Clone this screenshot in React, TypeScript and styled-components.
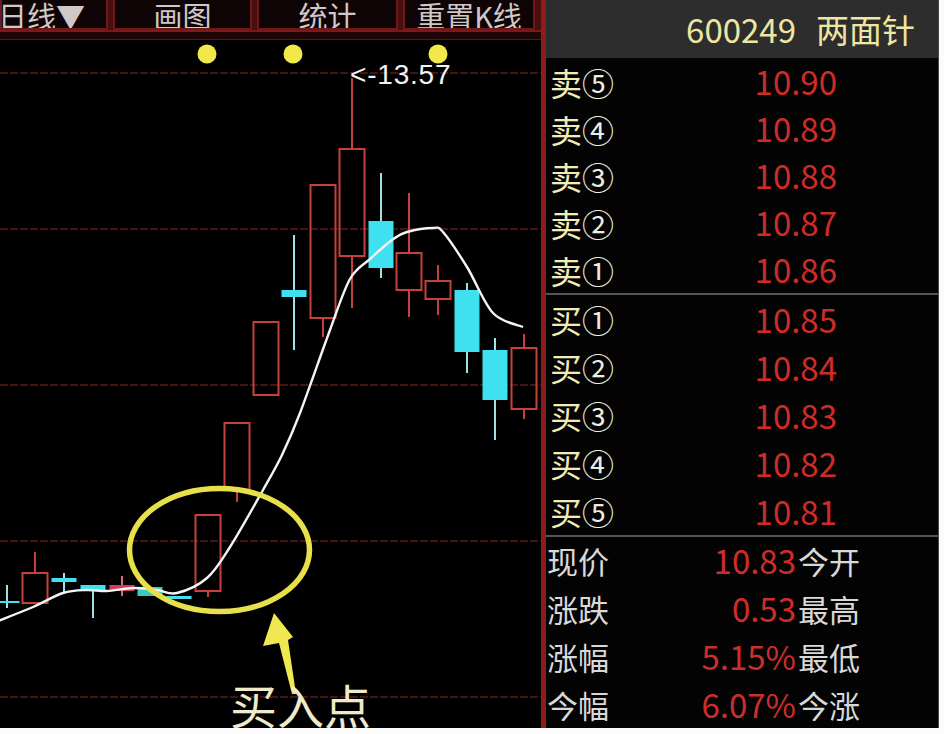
import React from "react";
import styled, { createGlobalStyle } from "styled-components";

const GlobalStyle = createGlobalStyle`
  html, body { margin: 0; padding: 0; background: #fbfbfb; }
  body { font-family: "Noto Sans CJK SC", "Noto Sans", sans-serif; }
`;

const Screen = styled.div`
  width: 944px;
  height: 734px;
  background: #fbfbfb;
  overflow: hidden;
`;

const Frame = styled.div`
  display: flex;
  width: 939px;
  height: 728px;
  background: #000;
`;

const ChartPane = styled.section`
  display: flex;
  flex-direction: column;
  width: 541px;
  flex: none;
  background: #000;
`;

const Toolbar = styled.div`
  display: flex;
  gap: 5px;
  height: 30px;
  flex: none;
  padding-right: 6px;
  background: #4a0e0e;
`;

const Tab = styled.div<{ $w: number; $left?: boolean }>`
  width: ${(p) => p.$w}px;
  flex: none;
  box-sizing: border-box;
  display: flex;
  align-items: flex-end;
  justify-content: ${(p) => (p.$left ? "flex-start" : "center")};
  overflow: hidden;
  background: #0f0405;
  border: 2px solid #701818;
  border-top: none;
  color: #cfc8c8;
  font-size: 29px;
  line-height: 1;
`;

const TabText = styled.span<{ $shift?: number }>`
  margin-left: ${(p) => p.$shift ?? 0}px;
  margin-bottom: -2px;
  white-space: nowrap;
`;

const Band = styled.div`
  height: 10px;
  flex: none;
  box-sizing: border-box;
  background: #200505;
  border-top: 2px solid #7c1a1a;
  border-bottom: 1px solid #5a1212;
`;

const ChartArea = styled.div`
  position: relative;
  flex: 1;
  overflow: hidden;
`;

const ChartSvg = styled.svg`
  display: block;
`;

const PriceTag = styled.div`
  position: absolute;
  left: 350px;
  top: 21px;
  color: #f2f2f2;
  font-family: "Liberation Sans", Arial, sans-serif;
  font-size: 28px;
  line-height: 1;
  letter-spacing: 0.8px;
  white-space: nowrap;
`;

const Annotation = styled.div`
  position: absolute;
  left: 230px;
  top: 640px;
  color: #efeacb;
  font-size: 47px;
  line-height: 1;
  white-space: nowrap;
`;

const QuotePanel = styled.section`
  width: 398px;
  flex: none;
  box-sizing: border-box;
  display: flex;
  flex-direction: column;
  background: #030303;
  border-left: 5px solid #8c1c1c;
  border-right: 1px solid #4a4a4a;
`;

const QuoteHeader = styled.header`
  height: 58px;
  flex: none;
  display: flex;
  align-items: center;
  justify-content: flex-end;
  padding-right: 23px;
  background: #2d2d2d;
  color: #eee6a2;
  font-size: 33px;
  line-height: 1;
`;

const StockName = styled.span`
  margin-left: 20px;
`;

const Book = styled.div`
  display: flex;
  flex-direction: column;
  flex: none;
`;

const BookRow = styled.div<{ $h: number }>`
  height: ${(p) => p.$h}px;
  display: flex;
  align-items: center;
  padding: 0 101px 0 4px;
  line-height: 1;
`;

const Side = styled.span`
  color: #f1ebb6;
  font-size: 32px;
`;

const Level = styled.span`
  color: #ecece0;
  font-size: 32px;
`;

const Price = styled.span`
  margin-left: auto;
  color: #cf2b27;
  font-size: 33px;
`;

const Divider = styled.div`
  height: 2px;
  flex: none;
  background: #555;
`;

const StatRow = styled.div`
  height: 48px;
  display: grid;
  grid-template-columns: 1fr auto 142px;
  align-items: center;
  padding-left: 1px;
  line-height: 1;
`;

const StatLabel = styled.span<{ $pad?: number }>`
  color: #d8d8d8;
  font-size: 31px;
  padding-left: ${(p) => p.$pad ?? 0}px;
`;

const StatValue = styled.span`
  color: #cc2e2a;
  font-size: 33px;
  text-align: right;
`;

type Kind = "up" | "down" | "pink" | "teal";
interface Candle {
  x: number;
  top: number;
  bot: number;
  hi?: number;
  lo?: number;
  k: Kind;
}

const candles: Candle[] = [
  { x: 7, top: 601, bot: 603, hi: 585, lo: 608, k: "down" },
  { x: 35, top: 573, bot: 603, hi: 552, k: "up" },
  { x: 64, top: 578, bot: 582, hi: 573, lo: 592, k: "down" },
  { x: 93, top: 585, bot: 591, hi: 585, lo: 618, k: "down" },
  { x: 122, top: 585, bot: 591, hi: 576, lo: 596, k: "pink" },
  { x: 150, top: 587, bot: 596, k: "teal" },
  { x: 179, top: 596, bot: 599, k: "down" },
  { x: 208, top: 515, bot: 591, lo: 597, k: "up" },
  { x: 237, top: 423, bot: 490, lo: 502, k: "up" },
  { x: 266, top: 322, bot: 395, k: "up" },
  { x: 294, top: 290, bot: 297, hi: 235, lo: 350, k: "down" },
  { x: 323, top: 185, bot: 318, lo: 337, k: "up" },
  { x: 352, top: 149, bot: 256, hi: 78, lo: 308, k: "up" },
  { x: 381, top: 221, bot: 268, hi: 173, lo: 278, k: "down" },
  { x: 409, top: 253, bot: 290, hi: 193, lo: 317, k: "up" },
  { x: 438, top: 281, bot: 299, hi: 265, lo: 315, k: "up" },
  { x: 467, top: 290, bot: 352, hi: 283, lo: 373, k: "down" },
  { x: 495, top: 350, bot: 400, hi: 338, lo: 440, k: "down" },
  { x: 524, top: 348, bot: 409, hi: 334, lo: 419, k: "up" },
];

const maPoints: [number, number][] = [
  [-2, 621], [33, 607], [63, 593], [87, 590], [107, 591], [133, 588], [157, 590],
  [177, 593], [207, 578], [230, 547], [263, 490], [282, 455], [300, 413],
  [330, 330], [350, 279], [370, 259], [392, 240], [407, 232], [433, 228],
  [443, 232], [467, 267], [493, 313], [523, 327],
];

function smoothPath(pts: [number, number][]) {
  let d = `M${pts[0][0]},${pts[0][1]}`;
  for (let i = 0; i < pts.length - 1; i++) {
    const p0 = pts[i - 1] || pts[i];
    const p1 = pts[i];
    const p2 = pts[i + 1];
    const p3 = pts[i + 2] || p2;
    const c1x = p1[0] + (p2[0] - p0[0]) / 6;
    const c1y = p1[1] + (p2[1] - p0[1]) / 6;
    const c2x = p2[0] - (p3[0] - p1[0]) / 6;
    const c2y = p2[1] - (p3[1] - p1[1]) / 6;
    d += ` C${c1x},${c1y} ${c2x},${c2y} ${p2[0]},${p2[1]}`;
  }
  return d;
}

const RED = "#c8403a";
const CYAN = "#3fe0f0";
const CYAN_WICK = "#9fdfe8";

function CandleMark({ c }: { c: Candle }) {
  const w = 25;
  const left = c.x - w / 2;
  if (c.k === "up") {
    return (
      <g stroke={RED} strokeWidth={2} fill="none">
        {c.hi !== undefined && <line x1={c.x} x2={c.x} y1={c.hi} y2={c.top} />}
        {c.lo !== undefined && <line x1={c.x} x2={c.x} y1={c.bot} y2={c.lo} />}
        <rect x={left} y={c.top} width={w} height={c.bot - c.top} />
      </g>
    );
  }
  const fill = c.k === "pink" ? "#d03c58" : c.k === "teal" ? "#36cbbc" : CYAN;
  const wick = c.k === "pink" ? "#d66a7c" : CYAN_WICK;
  return (
    <g>
      {c.hi !== undefined && c.lo !== undefined && (
        <line x1={c.x} x2={c.x} y1={c.hi} y2={c.lo} stroke={wick} strokeWidth={2} />
      )}
      <rect x={left} y={c.top} width={w} height={Math.max(c.bot - c.top, 2)} fill={fill} />
    </g>
  );
}

const gridYs = [73, 229, 385, 541, 697];

function KChart() {
  return (
    <ChartSvg width={541} height={688} viewBox="0 40 541 688">
      {gridYs.map((y) => (
        <line key={y} x1={0} x2={541} y1={y} y2={y} stroke="#5e1a1a" strokeWidth={1.5} strokeDasharray="8 2" />
      ))}
      {[207, 293, 438].map((x) => (
        <circle key={x} cx={x} cy={54} r={9.5} fill="#f2e84a" />
      ))}
      {candles.map((c, i) => (
        <CandleMark key={i} c={c} />
      ))}
      <path d={smoothPath(maPoints)} fill="none" stroke="#f4f4f4" strokeWidth={2.4} strokeLinejoin="round" />
      <ellipse cx={219.5} cy={550} rx={90} ry={61.5} fill="none" stroke="#e8e04a" strokeWidth={5.5} />
      <polygon
        points="274,613 293,637 288,640 296,694 292,694 279,643 263,646"
        fill="#f0e850"
      />
    </ChartSvg>
  );
}

const sells = [
  { n: "⑤", p: "10.90" },
  { n: "④", p: "10.89" },
  { n: "③", p: "10.88" },
  { n: "②", p: "10.87" },
  { n: "①", p: "10.86" },
];
const buys = [
  { n: "①", p: "10.85" },
  { n: "②", p: "10.84" },
  { n: "③", p: "10.83" },
  { n: "④", p: "10.82" },
  { n: "⑤", p: "10.81" },
];
const stats = [
  { a: "现价", v: "10.83", b: "今开" },
  { a: "涨跌", v: "0.53", b: "最高" },
  { a: "涨幅", v: "5.15%", b: "最低" },
  { a: "今幅", v: "6.07%", b: "今涨" },
];

export default function App() {
  return (
    <Screen>
      <GlobalStyle />
      <Frame>
        <ChartPane>
          <Toolbar>
            <Tab $w={108} $left>
              <TabText $shift={-4}>日线▼</TabText>
            </Tab>
            <Tab $w={139}>
              <TabText>画图</TabText>
            </Tab>
            <Tab $w={141}>
              <TabText>统计</TabText>
            </Tab>
            <Tab $w={132}>
              <TabText>重置K线</TabText>
            </Tab>
          </Toolbar>
          <Band />
          <ChartArea>
            <KChart />
            <PriceTag>&lt;-13.57</PriceTag>
            <Annotation>买入点</Annotation>
          </ChartArea>
        </ChartPane>
        <QuotePanel>
          <QuoteHeader>
            <span>600249</span>
            <StockName>两面针</StockName>
          </QuoteHeader>
          <Book>
            {sells.map((r) => (
              <BookRow key={"s" + r.n} $h={47}>
                <Side>卖</Side>
                <Level>{r.n}</Level>
                <Price>{r.p}</Price>
              </BookRow>
            ))}
          </Book>
          <Divider />
          <Book>
            {buys.map((r) => (
              <BookRow key={"b" + r.n} $h={48}>
                <Side>买</Side>
                <Level>{r.n}</Level>
                <Price>{r.p}</Price>
              </BookRow>
            ))}
          </Book>
          <Divider />
          {stats.map((s) => (
            <StatRow key={s.a}>
              <StatLabel>{s.a}</StatLabel>
              <StatValue>{s.v}</StatValue>
              <StatLabel $pad={2}>{s.b}</StatLabel>
            </StatRow>
          ))}
        </QuotePanel>
      </Frame>
    </Screen>
  );
}
